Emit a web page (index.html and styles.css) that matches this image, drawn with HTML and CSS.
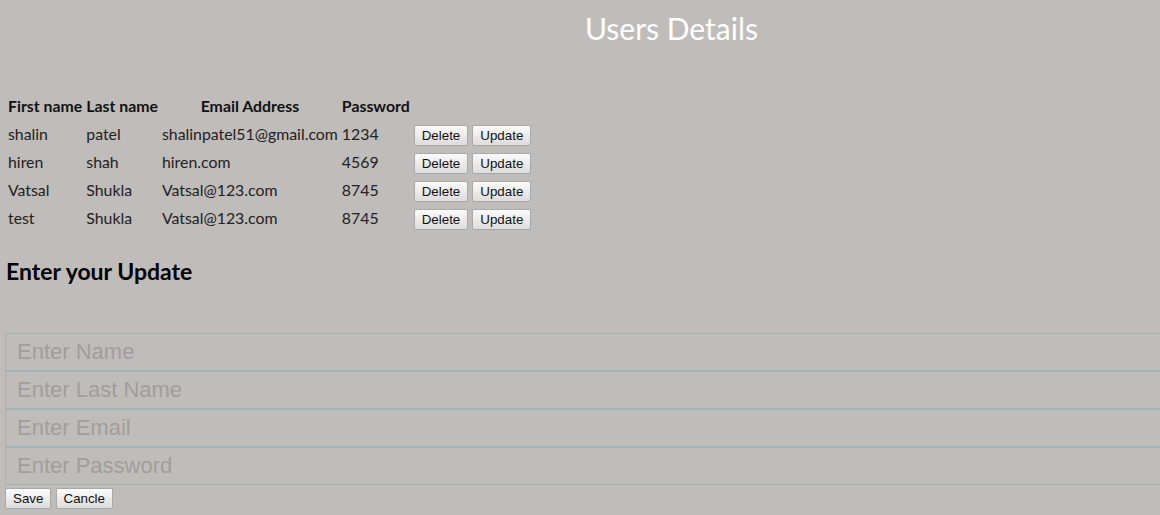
FILE: index.html
```html
<!DOCTYPE html>
<html>
<head>
<meta charset="utf-8">
<title>Users Details</title>
<link rel="stylesheet" href="styles.css">
</head>
<body>
<div class="page">
  <h1 class="title">Users Details</h1>
  <table class="users">
    <thead>
      <tr><th>First name</th><th>Last name</th><th>Email Address</th><th>Password</th><th></th></tr>
    </thead>
    <tbody>
      <tr><td>shalin</td><td>patel</td><td>shalinpatel51@gmail.com</td><td>1234</td><td><button class="btn">Delete</button> <button class="btn">Update</button></td></tr>
      <tr><td>hiren</td><td>shah</td><td>hiren.com</td><td>4569</td><td><button class="btn">Delete</button> <button class="btn">Update</button></td></tr>
      <tr><td>Vatsal</td><td>Shukla</td><td>Vatsal@123.com</td><td>8745</td><td><button class="btn">Delete</button> <button class="btn">Update</button></td></tr>
      <tr><td>test</td><td>Shukla</td><td>Vatsal@123.com</td><td>8745</td><td><button class="btn">Delete</button> <button class="btn">Update</button></td></tr>
    </tbody>
  </table>
  <h2 class="subtitle">Enter your Update</h2>
  <form class="form">
    <input class="field" type="text" placeholder="Enter Name">
    <input class="field" type="text" placeholder="Enter Last Name">
    <input class="field" type="text" placeholder="Enter Email">
    <input class="field" type="password" placeholder="Enter Password">
    <div class="actions"><button type="button" class="btn">Save</button> <button type="button" class="btn">Cancle</button></div>
  </form>
</div>
</body>
</html>
```
FILE: styles.css
```css
html, body {
  margin: 0;
  overflow: hidden;
}
body {
  background: #c0bcb9;
  font-family: "Lato", "Noto Sans", sans-serif;
  color: #1a1a1a;
}
.page {
  padding: 0 5px;
}
.title {
  margin: 10px 0 0;
  padding-left: 183px;
  text-align: center;
  color: #ffffff;
  font-weight: 400;
  font-size: 30px;
  line-height: 36px;
}
.users {
  margin-top: 45px;
  border-spacing: 2px;
}
.users th {
  padding: 1px;
  font-size: 15.85px;
  font-weight: 700;
  line-height: 24px;
  color: #111;
  text-align: center;
}
.users td {
  padding: 1px;
  font-size: 15.85px;
  line-height: 24px;
  color: #222;
  white-space: nowrap;
}
.btn {
  font-family: Arial, "Liberation Sans", sans-serif;
  font-size: 13.33px;
  color: #111;
  padding: 2px 7px;
  margin: 0;
  border: 1px solid #a9a9a9;
  border-radius: 2px;
  background: linear-gradient(#fbfbfb, #dcdcdc);
  line-height: 15px;
}
.subtitle {
  margin: 23px 0 0 1px;
  font-size: 23px;
  font-weight: 700;
  line-height: 30px;
  color: #000;
}
.form {
  margin-top: 47px;
}
.field {
  display: block;
  box-sizing: border-box;
  width: calc(100% + 30px);
  height: 38px;
  margin: 0;
  padding: 0 11px;
  border: 1px solid #9fb5b1;
  background: transparent;
  font-family: Arial, "Liberation Sans", sans-serif;
  font-size: 22px;
  outline: none;
}
.field::placeholder {
  color: #a19e9c;
}
.actions {
  margin-top: 2px;
}
```
